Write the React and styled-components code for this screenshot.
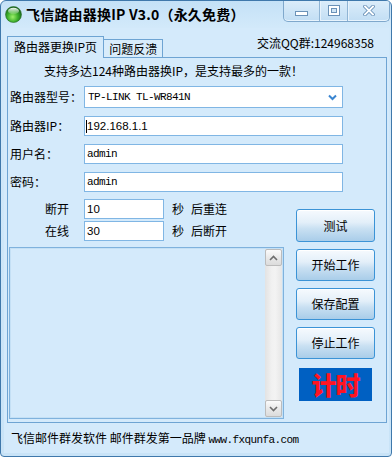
import React from 'react'
import styled, { createGlobalStyle } from 'styled-components'

const GlobalStyle = createGlobalStyle`
  html, body {
    margin: 0;
    padding: 0;
    background: #ffffff;
  }
  body {
    font-family: "Noto Sans CJK SC", "Liberation Sans", sans-serif;
    font-size: 12px;
    color: #000;
  }
`

const PANEL_BG = '#d4eafb'

const Window = styled.div`
  width: 392px;
  height: 457px;
  box-sizing: border-box;
  border: 1px solid #3f78ab;
  border-radius: 6px 6px 4px 4px;
  background: linear-gradient(#c4e1f7, #d2e9fa 26px, #c8e3f7);
  display: flex;
  flex-direction: column;
  overflow: hidden;
`

const TitleBar = styled.div`
  height: 27px;
  flex: none;
  display: flex;
  align-items: center;
  padding-left: 4px;
`

const AppIcon = styled.svg`
  flex: none;
  width: 17px;
  height: 17px;
  margin-right: 4px;
  margin-top: -1px;
`

const Title = styled.div`
  font-size: 14px;
  font-weight: 700;
  line-height: 18px;
  letter-spacing: 0.2px;
  margin-top: -1px;
  white-space: nowrap;
`

const Caption = styled.div`
  margin-left: auto;
  margin-right: 1px;
  align-self: flex-start;
  margin-top: -1px;
  height: 22px;
  box-sizing: border-box;
  display: flex;
  border: 1px solid #7fa8cc;
  border-top: none;
  border-radius: 0 0 5px 5px;
  background: linear-gradient(#dcedfa, #c2def4);
  box-shadow: inset 0 -1px 0 #e8f4fd;
  overflow: hidden;
`

const CaptionBtn = styled.div`
  width: ${p => p.w}px;
  display: flex;
  justify-content: center;
  align-items: ${p => (p.low ? 'flex-end' : 'center')};
  padding-bottom: ${p => (p.low ? '5px' : '0')};
  box-sizing: border-box;
  & + & {
    border-left: 1px solid #8fb4d4;
    box-shadow: inset 1px 0 0 #e6f2fc;
  }
`

const Client = styled.div`
  flex: 1;
  margin: 0 2px 3px 3px;
  background: ${PANEL_BG};
  padding: 0 2px 0 3px;
  display: flex;
  flex-direction: column;
`

const TabRow = styled.div`
  margin-top: 8px;
  height: 21px;
  display: flex;
  align-items: flex-end;
  position: relative;
  z-index: 1;
`

const Tab = styled.div`
  box-sizing: border-box;
  height: ${p => (p.active ? '22px' : '18px')};
  margin-bottom: ${p => (p.active ? '-1px' : '0')};
  padding: 0 ${p => (p.active ? '6px' : '5px')};
  line-height: ${p => (p.active ? '20px' : '17px')};
  border: 1px solid #6ea4d3;
  border-bottom: none;
  background: ${p => (p.active ? PANEL_BG : '#d8ecfb')};
  white-space: nowrap;
  & + & {
    border-left: none;
  }
`

const QQ = styled.div`
  margin-left: auto;
  margin-right: 13px;
  align-self: flex-start;
  margin-top: -1px;
  line-height: 16px;
  white-space: nowrap;
`

const Panel = styled.div`
  border: 1px solid #6ea4d3;
  background: ${PANEL_BG};
  padding: 5px 0 3px 0;
  display: flex;
  flex-direction: column;
`

const Notice = styled.div`
  padding-left: 36px;
  line-height: 16px;
  white-space: nowrap;
`

const Form = styled.div`
  margin-top: 7px;
  padding-left: 2px;
  display: grid;
  grid-template-columns: 74px 259px;
  row-gap: 8px;
  align-items: center;
`

const Label = styled.div`
  line-height: 16px;
  white-space: nowrap;
`

const Colon = styled.span`
  display: inline-block;
  width: 12px;
  text-align: center;
`

const Field = styled.div`
  box-sizing: border-box;
  height: ${p => p.h || 20}px;
  width: ${p => p.w || 259}px;
  border: 1px solid #80b6e4;
  background: #fff;
  display: flex;
  align-items: center;
  padding-left: ${p => p.pad || 2}px;
  padding-right: 4px;
`

const MonoText = styled.span`
  font-family: "Liberation Mono", "DejaVu Sans Mono", monospace;
  font-size: 11px;
  letter-spacing: -0.6px;
  white-space: nowrap;
`

const SansText = styled.span`
  font-family: "Liberation Sans", Arial, sans-serif;
  font-size: 11.5px;
  white-space: nowrap;
`

const Caret = styled.span`
  width: 1px;
  height: 13px;
  background: #000;
  flex: none;
`

const Chevron = styled.svg`
  margin-left: auto;
  margin-right: 1px;
  flex: none;
`

const Lower = styled.div`
  margin-top: 7px;
  display: flex;
`

const LeftCol = styled.div`
  margin-left: 1px;
  width: 275px;
  display: flex;
  flex-direction: column;
`

const TimeRow = styled.div`
  display: flex;
  align-items: center;
  padding-left: 36px;
  height: 20px;
  & + & {
    margin-top: 2px;
  }
`

const TimeLabel = styled.span`
  width: 39px;
  line-height: 16px;
  white-space: nowrap;
`

const Unit = styled.span`
  margin-left: ${p => p.gap}px;
  line-height: 16px;
  white-space: nowrap;
`

const Log = styled.div`
  margin-top: 6px;
  height: 172px;
  box-sizing: border-box;
  border: 1px solid #7fb2dd;
  box-shadow: inset 0 0 0 1px #c4e0f5;
  padding: 1px;
  display: flex;
  background: ${PANEL_BG};
`

const LogBody = styled.div`
  flex: 1;
`

const ScrollBar = styled.div`
  width: 17px;
  display: flex;
  flex-direction: column;
  background: linear-gradient(to right, #e3e3e3, #f1f1f1 40%, #f3f3f3 60%, #e6e6e6);
`

const ScrollBtn = styled.div`
  height: 17px;
  box-sizing: border-box;
  border: 1px solid #bcbcbc;
  border-radius: 2px;
  background: linear-gradient(#fbfbfb, #e9e9e9 50%, #dcdcdc);
  display: flex;
  justify-content: center;
  align-items: center;
  margin-top: ${p => (p.bottom ? 'auto' : '0')};
`

const ButtonCol = styled.div`
  margin-left: 12px;
  width: 79px;
  padding-top: 10px;
  display: flex;
  flex-direction: column;
  gap: 7px;
`

const Button = styled.div`
  height: ${p => p.h || 32}px;
  box-sizing: border-box;
  border: 1px solid #3b93d6;
  border-radius: 3px;
  background: linear-gradient(#f6fafe, #e3eff9 40%, #c9e0f2 60%, #a9cde9);
  box-shadow: inset 0 1px 0 #ffffff;
  display: flex;
  justify-content: center;
  align-items: center;
  font-size: 12px;
  line-height: 16px;
  white-space: nowrap;
`

const Timer = styled.div`
  align-self: center;
  margin-top: 2px;
  width: 73px;
  height: 33px;
  background: #0060c2;
  color: #ff1422;
  font-size: 25px;
  font-weight: 900;
  line-height: 33px;
  text-align: center;
  letter-spacing: -1px;
`

const Footer = styled.div`
  margin-top: 7px;
  padding-left: 4px;
  line-height: 16px;
  white-space: nowrap;
`

const ArrowUp = () => (
  <svg width="9" height="6" viewBox="0 0 9 6">
    <path d="M1 5 L4.5 1.5 L8 5" fill="none" stroke="#6e6e6e" strokeWidth="1.6" />
  </svg>
)

const ArrowDown = () => (
  <svg width="9" height="6" viewBox="0 0 9 6">
    <path d="M1 1 L4.5 4.5 L8 1" fill="none" stroke="#6e6e6e" strokeWidth="1.6" />
  </svg>
)

const App = () => (
  <>
    <GlobalStyle />
    <Window>
      <TitleBar>
        <AppIcon viewBox="0 0 17 17">
          <defs>
            <radialGradient id="orb" cx="45%" cy="65%" r="60%">
              <stop offset="0%" stopColor="#9df06a" />
              <stop offset="55%" stopColor="#3cae2a" />
              <stop offset="100%" stopColor="#16641a" />
            </radialGradient>
            <linearGradient id="gloss" x1="0" y1="0" x2="0" y2="1">
              <stop offset="0%" stopColor="#ffffff" stopOpacity="0.95" />
              <stop offset="100%" stopColor="#ffffff" stopOpacity="0.1" />
            </linearGradient>
          </defs>
          <circle cx="8.5" cy="8.5" r="8" fill="url(#orb)" stroke="#2a6b2a" strokeWidth="0.6" />
          <ellipse cx="8.5" cy="5" rx="5.5" ry="3.3" fill="url(#gloss)" />
        </AppIcon>
        <Title>飞信路由器换IP V3.0（永久免费）</Title>
        <Caption>
          <CaptionBtn w={35} low>
            <svg width="13" height="5" viewBox="0 0 13 5">
              <rect x="0.5" y="0.5" width="12" height="4" fill="#fff" stroke="#6b92b8" />
            </svg>
          </CaptionBtn>
          <CaptionBtn w={28}>
            <svg width="12" height="11" viewBox="0 0 12 11">
              <rect x="0.5" y="0.5" width="11" height="10" fill="#fff" stroke="#6b92b8" />
              <rect x="3.5" y="3.5" width="5" height="4" fill="#cfe5f6" stroke="#6b92b8" />
            </svg>
          </CaptionBtn>
          <CaptionBtn w={42}>
            <svg width="12" height="11" viewBox="0 0 12 11">
              <path d="M2 1.5 L10 9.5 M10 1.5 L2 9.5" stroke="#6b92b8" strokeWidth="3.6" strokeLinecap="square" />
              <path d="M2 1.5 L10 9.5 M10 1.5 L2 9.5" stroke="#ffffff" strokeWidth="1.8" strokeLinecap="square" />
            </svg>
          </CaptionBtn>
        </Caption>
      </TitleBar>

      <Client>
        <TabRow>
          <Tab active>路由器更换IP页</Tab>
          <Tab>问题反溃</Tab>
          <QQ>交流QQ群:124968358</QQ>
        </TabRow>

        <Panel>
          <Notice>支持多达124种路由器换IP，是支持最多的一款！</Notice>

          <Form>
            <Label>路由器型号<Colon>：</Colon></Label>
            <Field h={22} pad={3}>
              <MonoText>TP-LINK TL-WR841N</MonoText>
              <Chevron width="9" height="7" viewBox="0 0 9 7">
                <path d="M1 1.5 L4.5 5 L8 1.5" fill="none" stroke="#3a85d0" strokeWidth="2" />
              </Chevron>
            </Field>

            <Label>路由器IP<Colon>：</Colon></Label>
            <Field pad={1}>
              <Caret />
              <SansText>192.168.1.1</SansText>
            </Field>

            <Label>用户名<Colon>：</Colon></Label>
            <Field>
              <MonoText>admin</MonoText>
            </Field>

            <Label>密码<Colon>：</Colon></Label>
            <Field>
              <MonoText>admin</MonoText>
            </Field>
          </Form>

          <Lower>
            <LeftCol>
              <TimeRow>
                <TimeLabel>断开</TimeLabel>
                <Field w={80}>
                  <SansText>10</SansText>
                </Field>
                <Unit gap={8}>秒</Unit>
                <Unit gap={7}>后重连</Unit>
              </TimeRow>
              <TimeRow>
                <TimeLabel>在线</TimeLabel>
                <Field w={80}>
                  <SansText>30</SansText>
                </Field>
                <Unit gap={8}>秒</Unit>
                <Unit gap={7}>后断开</Unit>
              </TimeRow>

              <Log>
                <LogBody />
                <ScrollBar>
                  <ScrollBtn>
                    <ArrowUp />
                  </ScrollBtn>
                  <ScrollBtn bottom>
                    <ArrowDown />
                  </ScrollBtn>
                </ScrollBar>
              </Log>
            </LeftCol>

            <ButtonCol>
              <Button h={33}>测试</Button>
              <Button>开始工作</Button>
              <Button>保存配置</Button>
              <Button>停止工作</Button>
              <Timer>计时</Timer>
            </ButtonCol>
          </Lower>
        </Panel>

        <Footer>
          飞信邮件群发软件 邮件群发第一品牌 <MonoText>www.fxqunfa.com</MonoText>
        </Footer>
      </Client>
    </Window>
  </>
)

export default App
